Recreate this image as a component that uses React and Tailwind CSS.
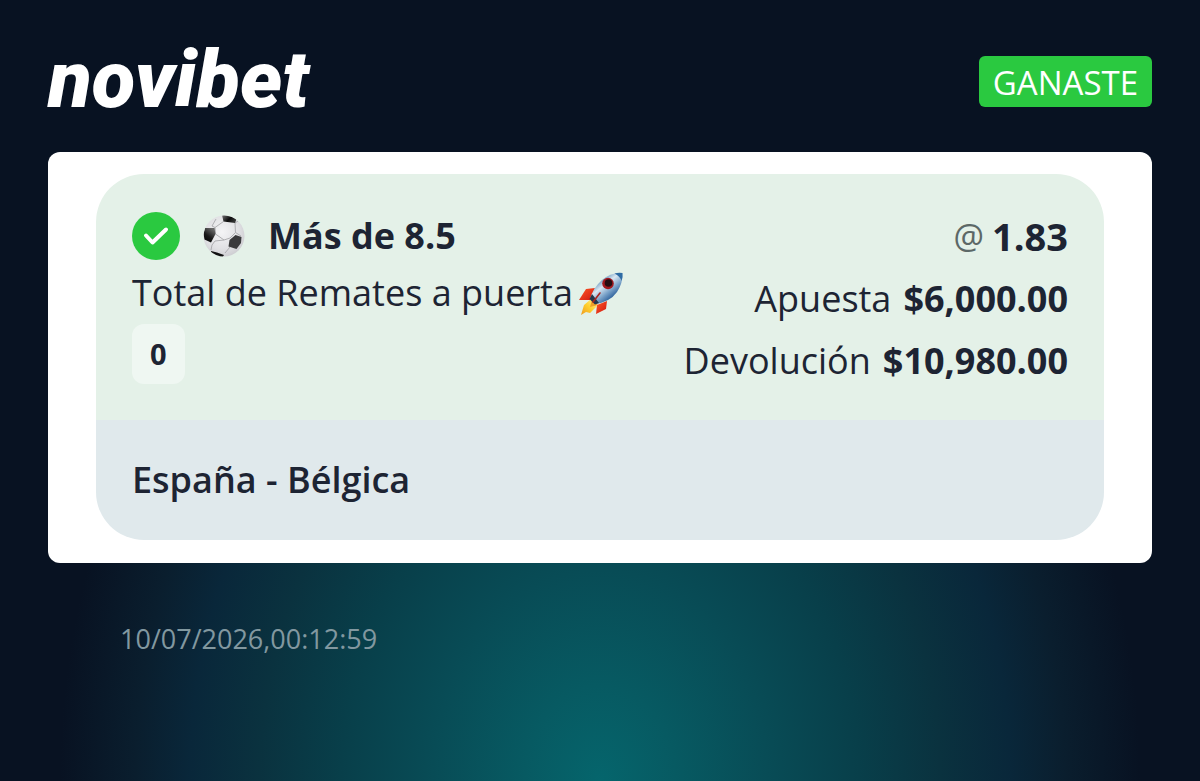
function CheckBadge() {
  return (
    <svg viewBox="0 0 48 48" className="size-12 shrink-0" role="img" aria-label="Ganada">
      <circle cx="24" cy="24" r="24" fill="#2ac940" />
      <path d="M14 23.500 L20.500 30.500 L34 17.500" fill="none" stroke="#fff" strokeWidth="4" strokeLinecap="round" strokeLinejoin="round" />
    </svg>
  );
}

function Ball() {
  return (
    <svg viewBox="0 0 44 44" className="size-11 shrink-0" role="img" aria-label="Fútbol">
      <defs>
        <radialGradient id="ball" cx="0.45" cy="0.4" r="0.6">
          <stop offset="0" stopColor="#f4f4f6" />
          <stop offset="0.7" stopColor="#e0e0e3" />
          <stop offset="1" stopColor="#cfcfd3" />
        </radialGradient>
        <linearGradient id="patchLeft" x1="0" y1="1" x2="0.6" y2="0">
          <stop offset="0" stopColor="#000" />
          <stop offset="0.5" stopColor="#1a1a1a" />
          <stop offset="1" stopColor="#666" />
        </linearGradient>
        <linearGradient id="patchTop" x1="0" y1="0" x2="1" y2="0.5">
          <stop offset="0" stopColor="#777" />
          <stop offset="0.6" stopColor="#0c0c0c" />
          <stop offset="1" stopColor="#333" />
        </linearGradient>
        <clipPath id="ballClip"><circle cx="22" cy="22" r="20.5" /></clipPath>
      </defs>
      <circle cx="22" cy="22" r="20.5" fill="url(#ball)" />
      <g clipPath="url(#ballClip)">
        <g fill="none" stroke="#a8a8ac" strokeWidth="0.9">
          <path d="M21.500 7.500 L13 13.500 L13.500 20 L22 26 L28 24 L33.500 18.500 L33 9" />
          <path d="M22 26 L13 27 L10 31 L9 36 M28 33 L23 39 M33.500 18.500 L39 22 M33 9 L36 7 M13 13.500 L10 12 L14 5" />
        </g>
        <path d="M20 1 L26 1 L34.500 5 L33 9 L21.500 7.500 Z" fill="url(#patchTop)" />
        <path d="M3 14 L12.500 14 L13.500 20 L9 28.500 L2.500 25.500 L1.500 20 Z" fill="url(#patchLeft)" />
        <path d="M27.500 26 L33.500 21 L39.500 23 L39 29 L34.500 35 L26.500 32.500 Z" fill="#3a3a3c" />
        <path d="M9 37 L15 38.500 L22 41 L20 44 L9 40 Z" fill="#111" />
      </g>
    </svg>
  );
}

function Rocket() {
  return (
    <svg viewBox="0 0 48 48" className="size-12 shrink-0" role="img" aria-label="Cohete">
      <defs>
        <linearGradient id="hull" x1="0.25" y1="0.2" x2="0.75" y2="0.8">
          <stop offset="0" stopColor="#4f86b4" />
          <stop offset="0.35" stopColor="#dbe8f2" />
          <stop offset="0.65" stopColor="#7fa6cb" />
          <stop offset="1" stopColor="#1f5594" />
        </linearGradient>
        <linearGradient id="fin" x1="0" y1="0" x2="1" y2="1">
          <stop offset="0" stopColor="#ff5a26" />
          <stop offset="1" stopColor="#cf1510" />
        </linearGradient>
        <linearGradient id="flame" x1="1" y1="0" x2="0" y2="1">
          <stop offset="0" stopColor="#fff3a0" />
          <stop offset="0.5" stopColor="#ffd02e" />
          <stop offset="1" stopColor="#ee9a20" />
        </linearGradient>
      </defs>
      <path d="M18 19 L9 20 L2 31 L13 31 Z" fill="url(#fin)" />
      <path d="M30 32 L29 40 L19 45 L20 36 Z" fill="url(#fin)" />
      <path d="M14 30 L7 36 L4 46 L9 43 L13 44 L20 37 Z" fill="url(#flame)" />
      <path d="M15 31 L13 38 L21 36 Z" fill="#f0a028" />
      <path d="M45.500 4 Q34 3 25 11 Q16 19 13 30 L18 35 Q33 33 40 23 Q46 14 45.500 4 Z" fill="url(#hull)" />
      <path d="M45.500 4 Q41 3.500 37.500 4.500 Q43 7 44.500 12 Q46 8 45.500 4 Z" fill="#2f6ca4" />
      <path d="M15 25 L22 34 L18 35.500 L12.500 30 Z" fill="#26374a" />
      <circle cx="31" cy="14.500" r="5.800" fill="#a0191f" />
      <circle cx="31.500" cy="14" r="3.800" fill="#260d12" />
      <path d="M23 24 L16 33" stroke="#a82622" strokeWidth="1.600" strokeLinecap="round" />
    </svg>
  );
}

function AmountRow({ label, value }) {
  return (
    <div className="flex items-baseline justify-end gap-3">
      <dt>{label}</dt>
      <dd className="font-bold">{value}</dd>
    </div>
  );
}

export default function App() {
  return (
    <main className='min-h-screen bg-[#081222] bg-[radial-gradient(ellipse_540px_680px_at_50%_100%,#05656c_0%,#075a62_14%,#084c56_31%,#083f4a_48%,#0a323f_63%,#09273a_76%,#0a1e2e_86%,#081222_100%)] bg-[length:100%_480px] bg-bottom bg-no-repeat px-12 pt-10 font-["Open_Sans",sans-serif] text-[#1d2433]'>
      <header className="flex h-28 items-start justify-between">
        <h1 className='font-["Roboto",sans-serif] text-[80px] leading-20 font-black italic text-white'>novibet</h1>
        <span className="mt-4 rounded-md bg-[#2ac940] px-3.5 pt-[5px] pb-[3px] text-[33px] leading-[43px] font-medium text-white">GANASTE</span>
      </header>

      <section className="rounded-xl bg-white px-12 pt-[22px] pb-[23px]">
        <article className="overflow-hidden rounded-[48px]">
          <div className="flex min-h-[246px] justify-between bg-[#e4f1e8] px-9 pt-9 text-4xl">
            <div className="flex flex-col items-start pb-9">
              <div className="flex h-[52px] items-center gap-[22px]">
                <CheckBadge />
                <Ball />
                <h2 className="font-bold">Más de 8.5</h2>
              </div>
              <p className="flex h-[62px] items-center gap-1">
                Total de Remates a puerta
                <Rocket />
              </p>
              <span className="rounded-xl bg-[#eff7f2] px-[18px] text-[29px] leading-15 font-bold">0</span>
            </div>
            <dl className="pb-7 text-right leading-[62px]">
              <div className="flex h-[58px] items-start justify-end gap-2 leading-[52px]">
                <dt className="text-[34px] text-[#5c6867]">@</dt>
                <dd className="text-[38px] font-bold">1.83</dd>
              </div>
              <AmountRow label="Apuesta" value="$6,000.00" />
              <AmountRow label="Devolución" value="$10,980.00" />
            </dl>
          </div>
          <h3 className="bg-[#e0e9ec] px-9 text-4xl leading-[120px] font-semibold">España - Bélgica</h3>
        </article>
      </section>

      <time className="mt-14 ml-[72px] block text-[27px] leading-10 text-[#8298a0]">10/07/2026,00:12:59</time>
    </main>
  );
}
